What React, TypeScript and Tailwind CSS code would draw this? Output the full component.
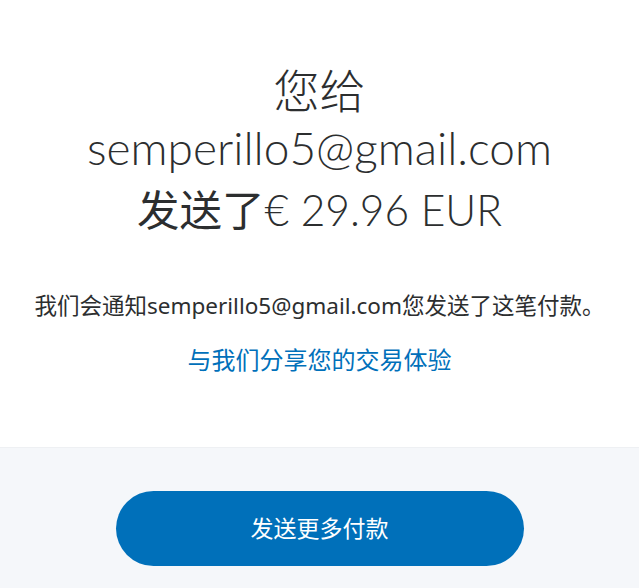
import React from "react";

export default function App() {
  const cjk = '"Noto Sans", "Noto Sans CJK SC", sans-serif';
  const big = 'Lato, "Noto Sans CJK SC", sans-serif';
  const cjkOnly = '"Noto Sans CJK SC", sans-serif';
  return (
    <div className="w-[639px] h-[588px] overflow-hidden bg-white" style={{ fontFamily: cjk }}>
      <div className="h-[448px] flex flex-col items-center pt-[58px] border-b border-[#eef0f3]">
        <h1
          className="flex flex-col items-center text-center text-[#2c2e2f] font-light"
          style={{ fontFamily: big }}
        >
          <span className="text-[46px] leading-[60px] font-light" style={{ fontFamily: cjkOnly }}>您给</span>
          <span className="text-[46px] leading-[60px]">semperillo5@gmail.com</span>
          <span className="text-[42.5px] leading-[60px]">
            <span className="font-normal" style={{ fontFamily: cjkOnly }}>发送了</span>
            <span>€ 29.96 EUR</span>
          </span>
        </h1>
        <p className="mt-[51px] text-[22.5px] leading-[30px] text-[#2c2e2f] text-center whitespace-nowrap">
          我们会通知semperillo5@gmail.com您发送了这笔付款。
        </p>
        <a className="mt-[24px] text-[24px] leading-[30px] text-[#0070ba] text-center">
          与我们分享您的交易体验
        </a>
      </div>
      <div className="bg-[#f5f7fa] h-[140px] flex justify-center pt-[43px]">
        <button className="w-[408px] h-[75px] rounded-full bg-[#0070ba] text-white text-[23px] flex items-center justify-center">
          发送更多付款
        </button>
      </div>
    </div>
  );
}
